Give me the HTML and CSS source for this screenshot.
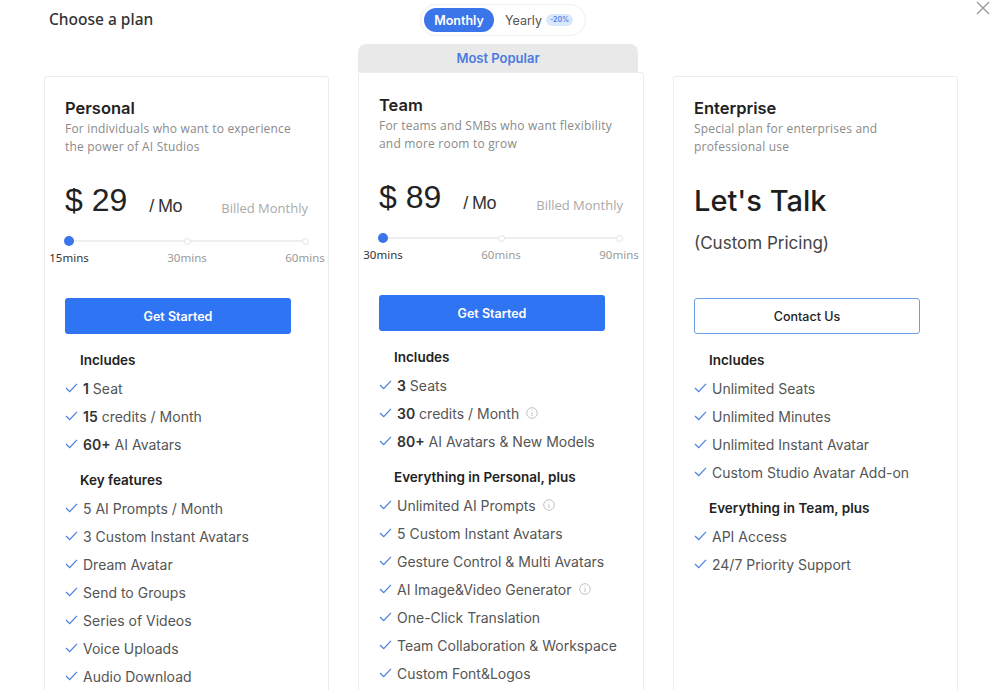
FILE: index.html
```html
<!DOCTYPE html>
<html lang="en">
<head>
<meta charset="utf-8">
<title>Choose a plan</title>
<link rel="stylesheet" href="styles.css">
</head>
<body>
<div class="modal">
  <header class="top">
    <h1 class="heading">Choose a plan</h1>
    <div class="toggle">
      <span class="tog active">Monthly</span>
      <span class="tog">Yearly <span class="badge">-20%</span></span>
    </div>
    <button class="close" aria-label="Close">
      <svg width="14" height="14" viewBox="0 0 14 14"><path d="M1 1 L13 13 M13 1 L1 13" stroke="#9a9a9a" stroke-width="1.4" fill="none"/></svg>
    </button>
  </header>

  <div class="plans">
    <!-- Personal -->
    <section class="card">
      <h2 class="title">Personal</h2>
      <p class="desc">For individuals who want to experience the power of AI Studios</p>
      <div class="price-row">
        <span class="amount">$ 29</span>
        <span class="per">/ Mo</span>
        <span class="billed">Billed Monthly</span>
      </div>
      <div class="slider">
        <div class="stop"><span class="dot on"></span><span class="lbl on">15mins</span></div>
        <div class="stop"><span class="dot"></span><span class="lbl">30mins</span></div>
        <div class="stop"><span class="dot"></span><span class="lbl">60mins</span></div>
      </div>
      <button class="btn primary">Get Started</button>
      <h3 class="sec">Includes</h3>
      <ul class="list">
        <li><svg class="chk" viewBox="0 0 14 11"><path d="M1 5.5 L5 9.5 L13 1"/></svg><b>1</b>&nbsp;Seat</li>
        <li><svg class="chk" viewBox="0 0 14 11"><path d="M1 5.5 L5 9.5 L13 1"/></svg><b>15</b>&nbsp;credits / Month</li>
        <li><svg class="chk" viewBox="0 0 14 11"><path d="M1 5.5 L5 9.5 L13 1"/></svg><b>60+</b>&nbsp;AI Avatars</li>
      </ul>
      <h3 class="sec sec2">Key features</h3>
      <ul class="list">
        <li><svg class="chk" viewBox="0 0 14 11"><path d="M1 5.5 L5 9.5 L13 1"/></svg>5 AI Prompts / Month</li>
        <li><svg class="chk" viewBox="0 0 14 11"><path d="M1 5.5 L5 9.5 L13 1"/></svg>3 Custom Instant Avatars</li>
        <li><svg class="chk" viewBox="0 0 14 11"><path d="M1 5.5 L5 9.5 L13 1"/></svg>Dream Avatar</li>
        <li><svg class="chk" viewBox="0 0 14 11"><path d="M1 5.5 L5 9.5 L13 1"/></svg>Send to Groups</li>
        <li><svg class="chk" viewBox="0 0 14 11"><path d="M1 5.5 L5 9.5 L13 1"/></svg>Series of Videos</li>
        <li><svg class="chk" viewBox="0 0 14 11"><path d="M1 5.5 L5 9.5 L13 1"/></svg>Voice Uploads</li>
        <li><svg class="chk" viewBox="0 0 14 11"><path d="M1 5.5 L5 9.5 L13 1"/></svg>Audio Download</li>
      </ul>
    </section>

    <!-- Team -->
    <div class="popular-wrap">
      <div class="popular">Most Popular</div>
      <section class="card team">
        <h2 class="title">Team</h2>
        <p class="desc">For teams and SMBs who want flexibility and more room to grow</p>
        <div class="price-row">
          <span class="amount">$ 89</span>
          <span class="per">/ Mo</span>
          <span class="billed">Billed Monthly</span>
        </div>
        <div class="slider">
          <div class="stop"><span class="dot on"></span><span class="lbl on">30mins</span></div>
          <div class="stop"><span class="dot"></span><span class="lbl">60mins</span></div>
          <div class="stop"><span class="dot"></span><span class="lbl">90mins</span></div>
        </div>
        <button class="btn primary">Get Started</button>
        <h3 class="sec">Includes</h3>
        <ul class="list">
          <li><svg class="chk" viewBox="0 0 14 11"><path d="M1 5.5 L5 9.5 L13 1"/></svg><b>3</b>&nbsp;Seats</li>
          <li><svg class="chk" viewBox="0 0 14 11"><path d="M1 5.5 L5 9.5 L13 1"/></svg><b>30</b>&nbsp;credits / Month<svg class="info" viewBox="0 0 12 12"><circle cx="6" cy="6" r="5.3"/><path d="M6 5.2 V9 M6 3 V3.9"/></svg></li>
          <li><svg class="chk" viewBox="0 0 14 11"><path d="M1 5.5 L5 9.5 L13 1"/></svg><b>80+</b>&nbsp;AI Avatars &amp; New Models</li>
        </ul>
        <h3 class="sec sec2">Everything in Personal, plus</h3>
        <ul class="list">
          <li><svg class="chk" viewBox="0 0 14 11"><path d="M1 5.5 L5 9.5 L13 1"/></svg>Unlimited AI Prompts<svg class="info" viewBox="0 0 12 12"><circle cx="6" cy="6" r="5.3"/><path d="M6 5.2 V9 M6 3 V3.9"/></svg></li>
          <li><svg class="chk" viewBox="0 0 14 11"><path d="M1 5.5 L5 9.5 L13 1"/></svg>5 Custom Instant Avatars</li>
          <li><svg class="chk" viewBox="0 0 14 11"><path d="M1 5.5 L5 9.5 L13 1"/></svg>Gesture Control &amp; Multi Avatars</li>
          <li><svg class="chk" viewBox="0 0 14 11"><path d="M1 5.5 L5 9.5 L13 1"/></svg>AI Image&amp;Video Generator<svg class="info" viewBox="0 0 12 12"><circle cx="6" cy="6" r="5.3"/><path d="M6 5.2 V9 M6 3 V3.9"/></svg></li>
          <li><svg class="chk" viewBox="0 0 14 11"><path d="M1 5.5 L5 9.5 L13 1"/></svg>One-Click Translation</li>
          <li><svg class="chk" viewBox="0 0 14 11"><path d="M1 5.5 L5 9.5 L13 1"/></svg>Team Collaboration &amp; Workspace</li>
          <li><svg class="chk" viewBox="0 0 14 11"><path d="M1 5.5 L5 9.5 L13 1"/></svg>Custom Font&amp;Logos</li>
        </ul>
      </section>
    </div>

    <!-- Enterprise -->
    <section class="card">
      <h2 class="title">Enterprise</h2>
      <p class="desc">Special plan for enterprises and professional use</p>
      <div class="talk">Let's Talk</div>
      <div class="custom">(Custom Pricing)</div>
      <button class="btn outline">Contact Us</button>
      <h3 class="sec">Includes</h3>
      <ul class="list">
        <li><svg class="chk" viewBox="0 0 14 11"><path d="M1 5.5 L5 9.5 L13 1"/></svg>Unlimited Seats</li>
        <li><svg class="chk" viewBox="0 0 14 11"><path d="M1 5.5 L5 9.5 L13 1"/></svg>Unlimited Minutes</li>
        <li><svg class="chk" viewBox="0 0 14 11"><path d="M1 5.5 L5 9.5 L13 1"/></svg>Unlimited Instant Avatar</li>
        <li><svg class="chk" viewBox="0 0 14 11"><path d="M1 5.5 L5 9.5 L13 1"/></svg>Custom Studio Avatar Add-on</li>
      </ul>
      <h3 class="sec sec2">Everything in Team, plus</h3>
      <ul class="list">
        <li><svg class="chk" viewBox="0 0 14 11"><path d="M1 5.5 L5 9.5 L13 1"/></svg>API Access</li>
        <li><svg class="chk" viewBox="0 0 14 11"><path d="M1 5.5 L5 9.5 L13 1"/></svg>24/7 Priority Support</li>
      </ul>
    </section>
  </div>
</div>
</body>
</html>
```

FILE: styles.css
```css
* { box-sizing: border-box; }
html, body { margin: 0; padding: 0; background: #fff; }
body {
  font-family: "Open Sans", "Noto Sans", sans-serif;
  color: #333;
  overflow: hidden;
  height: 690px;
}
.modal { position: relative; width: 1000px; }

.top {
  height: 44px;
  display: flex;
  align-items: flex-start;
  padding-left: 49px;
}
.heading {
  margin: 8px 0 0;
  font-size: 15.5px;
  font-weight: 500;
  line-height: 22px;
  color: #333;
  font-family: "Noto Sans", sans-serif;
  width: 102px;
  white-space: nowrap;
}
.toggle {
  margin: 4px 0 0 269px;
  height: 32px;
  width: 166px;
  border: 1px solid #efefef;
  border-radius: 16px;
  display: flex;
  align-items: center;
  padding: 0 3px;
  gap: 11px;
}
.tog {
  font-family: "Inter", sans-serif;
  font-size: 12.5px;
  color: #555;
  display: flex;
  align-items: center;
  gap: 4px;
}
.tog.active {
  background: #3a76ea;
  color: #fff;
  font-weight: 600;
  height: 24px;
  width: 70px;
  border-radius: 12px;
  justify-content: center;
}
.badge {
  background: #dbe7fb;
  color: #4a7fe6;
  font-size: 7px;
  font-weight: 600;
  border-radius: 6px;
  padding: 2px 4px;
  line-height: 8px;
}
.close {
  position: absolute;
  right: 10px;
  top: 1px;
  border: 0;
  background: none;
  padding: 0;
  width: 14px;
  height: 14px;
}

.plans {
  display: flex;
  align-items: flex-start;
  padding-left: 44px;
  gap: 29px;
}
.card {
  width: 285px;
  height: 650px;
  margin-top: 32px;
  border: 1px solid #ececec;
  border-radius: 3px;
  padding: 19px 20px 0 20px;
  background: #fff;
}
.popular-wrap { width: 286px; }
.popular {
  height: 28px;
  width: 280px;
  background: #e9e9e9;
  border-radius: 8px 8px 0 0;
  text-align: center;
  line-height: 28px;
  color: #4a7be0;
  font-family: "Inter", sans-serif;
  font-weight: 600;
  font-size: 13px;
}
.card.team { margin-top: 0; padding-top: 20px; width: 286px; }

.title {
  margin: 0;
  font-family: "Inter", sans-serif;
  font-size: 16.5px;
  font-weight: 600;
  line-height: 24px;
  color: #222;
}
.desc {
  margin: 0;
  font-family: "Open Sans", sans-serif;
  font-size: 12px;
  line-height: 18px;
  color: #8a8a8a;
  letter-spacing: 0.2px;
  margin-right: -4px;
}
.price-row {
  margin-top: 26px;
  height: 36px;
  display: flex;
  align-items: baseline;
}
.amount {
  font-family: "Liberation Sans", Arial, sans-serif;
  font-size: 32px;
  line-height: 36px;
  color: #222;
}
.per {
  font-family: "Liberation Sans", Arial, sans-serif;
  font-size: 18px;
  margin-left: 22px;
  color: #333;
  letter-spacing: -0.6px;
  position: relative;
  top: 1px;
}
.billed {
  margin-left: auto;
  font-family: "Open Sans", sans-serif;
  font-size: 13px;
  color: #aaa;
  position: relative;
  top: 2px;
}

.slider {
  position: relative;
  margin: 18px 0 0 -16px;
  width: 276px;
  display: flex;
  justify-content: space-between;
}
.slider::before {
  content: "";
  position: absolute;
  left: 20px;
  right: 20px;
  top: 4px;
  height: 2px;
  background: #eeeeee;
}
.stop {
  width: 40px;
  display: flex;
  flex-direction: column;
  align-items: center;
  position: relative;
}
.dot {
  width: 7px;
  height: 7px;
  margin: 1.5px 0;
  border-radius: 50%;
  background: #fff;
  border: 1px solid #e2e2e2;
}
.dot.on {
  width: 10px;
  height: 10px;
  margin: 0;
  background: #3a76ea;
  border: 0;
}
.lbl {
  margin-top: 4px;
  font-family: "Noto Sans", sans-serif;
  font-size: 11.5px;
  line-height: 16px;
  color: #9a9a9a;
}
.lbl.on { color: #333; }

.btn {
  display: block;
  margin-top: 32px;
  width: 226px;
  height: 36px;
  border-radius: 3px;
  font-family: "Inter", sans-serif;
  font-size: 12.5px;
  font-weight: 600;
  cursor: pointer;
}
.btn.primary { background: #2f74f2; color: #fff; border: 0; }
.btn.outline { background: #fff; color: #222; border: 1px solid #6f9be8; font-weight: 500; }

.talk {
  margin-top: 25px;
  font-family: "Inter", sans-serif;
  font-size: 29px;
  line-height: 40px;
  font-weight: 500;
  color: #1e1e1e;
}
.custom {
  margin-top: 10px;
  font-family: "Inter", sans-serif;
  font-size: 17px;
  line-height: 24px;
  color: #444;
}
.talk + .custom + .btn { margin-top: 43px; }

.sec {
  margin: 16px 0 0 15px;
  font-family: "Inter", sans-serif;
  font-size: 13.5px;
  font-weight: 600;
  line-height: 20px;
  color: #222;
}
.sec2 { margin-top: 12px; }
.list {
  list-style: none;
  margin: 4px 0 0;
  padding: 0;
}
.list li {
  height: 28px;
  display: flex;
  align-items: center;
  font-family: "Inter", sans-serif;
  font-size: 14px;
  color: #555;
  white-space: nowrap;
}
.list b { font-weight: 600; color: #333; }
.chk {
  width: 13px;
  height: 10px;
  margin-right: 5px;
  fill: none;
  stroke: #4a80e0;
  stroke-width: 1.4;
  flex: none;
}
.info {
  width: 12px;
  height: 12px;
  margin-left: 7px;
  fill: none;
  stroke: #c2c2c2;
  stroke-width: 1;
}
```
